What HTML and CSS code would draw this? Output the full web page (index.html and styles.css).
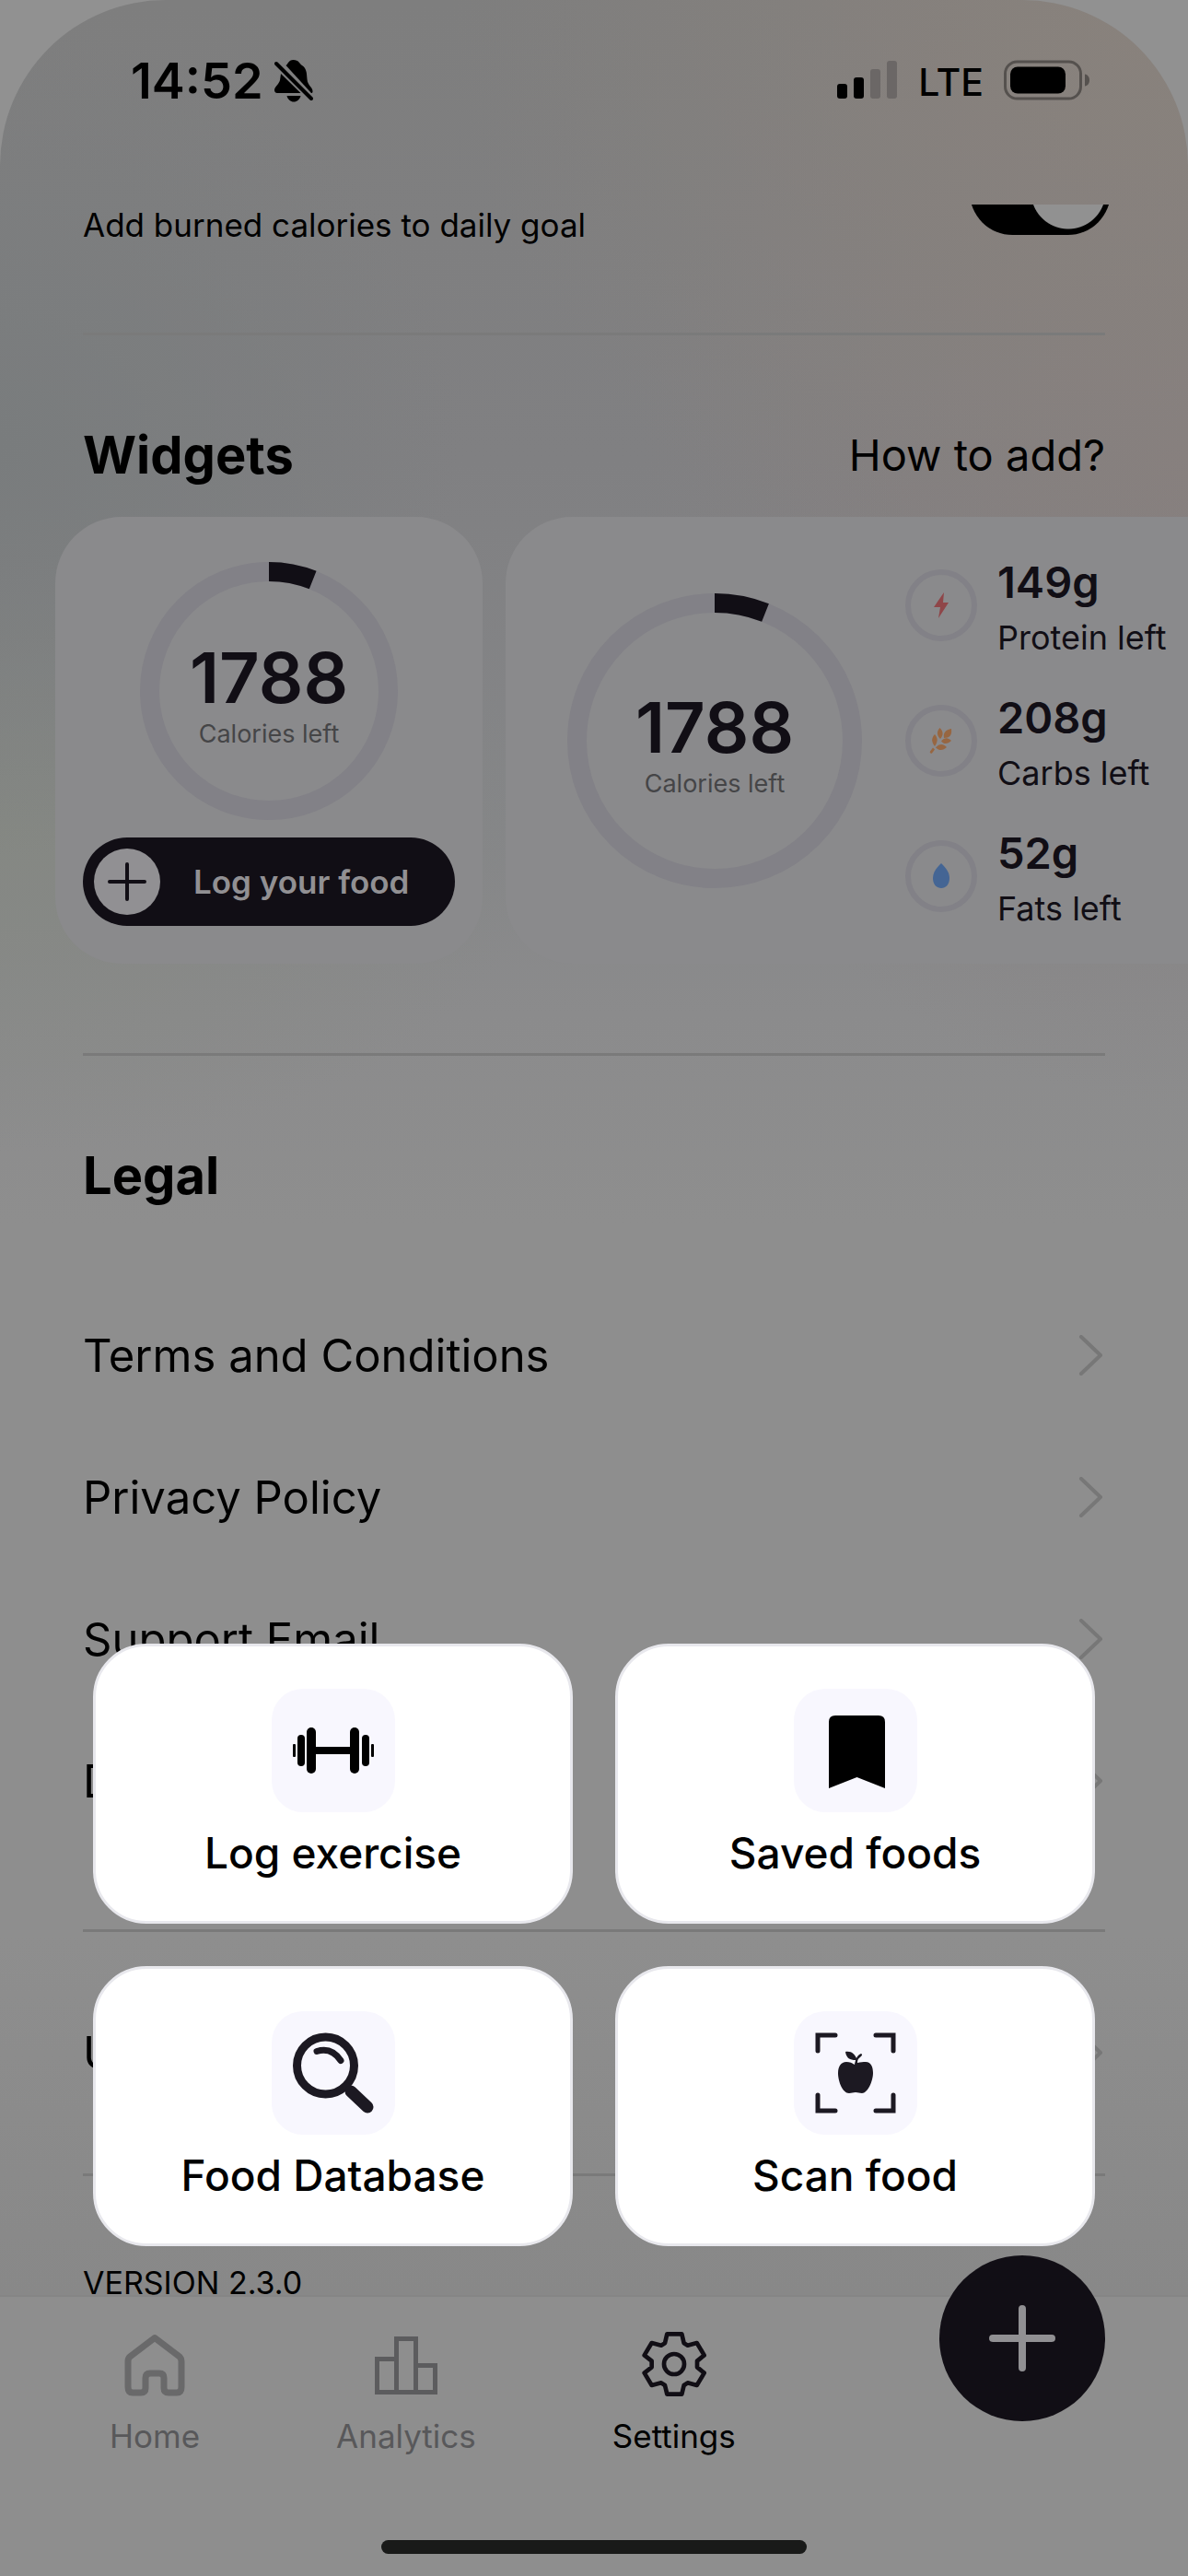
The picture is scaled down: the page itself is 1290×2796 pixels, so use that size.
FILE: index.html
```html
<!DOCTYPE html>
<html lang="en">
<head>
<meta charset="utf-8">
<meta name="viewport" content="width=device-width, initial-scale=1">
<title>Settings</title>
<link rel="stylesheet" href="styles.css">
</head>
<body>
<div class="screen">
  <header class="status">
    <span class="status-time">14:52</span>
    <svg class="bell" viewBox="0 0 42 46" aria-hidden="true">
      <path d="M12.500 6C14.500 5 15 0 20.500 0c6 0 6.500 4 9.500 6 5 3.500 5 8 5.500 15 .5 7 6 8.500 6 13 0 1.500-.5 2-1.500 2Z"/>
      <path d="M7 15 28.500 36H3c-2 0-3-1.500-3-3 0-4 5-6.500 6-11Z"/>
      <path d="M13.500 39h15c-1 4-4 6.500-7.500 6.500S14.500 43 13.500 39Z"/>
      <path class="bell-slash" d="M2 4 40 42"/>
    </svg>
    <svg class="signal" viewBox="0 0 66 42" aria-hidden="true">
      <rect x="0" y="26" width="11" height="16" rx="3"/>
      <rect x="18" y="19" width="11" height="23" rx="3"/>
      <rect class="faint" x="36" y="10" width="11" height="32" rx="3"/>
      <rect class="faint" x="54" y="1" width="11" height="41" rx="3"/>
    </svg>
    <span class="status-net">LTE</span>
    <svg class="battery" viewBox="0 0 94 44" aria-hidden="true">
      <rect class="battery-case" x="1.500" y="2" width="82" height="40" rx="13"/>
      <rect x="7" y="7.500" width="60" height="29" rx="8"/>
      <path class="battery-tip" d="M88 15.500c3 .5 5 3 5 6.500s-2 6-5 6.500Z"/>
    </svg>
  </header>

  <main class="content">
    <div class="toggle-row">
      <label for="burned">Add burned calories to daily goal</label>
      <span class="toggle-clip"><input id="burned" class="switch" type="checkbox" role="switch" checked></span>
    </div>
    <hr>

    <section class="widgets">
      <div class="section-head">
        <h2>Widgets</h2>
        <a href="#how">How to add?</a>
      </div>
      <div class="cards">
        <article class="card card-small">
          <div class="ring ring-s">
            <svg viewBox="0 0 280 280" aria-hidden="true">
              <circle class="track" cx="140" cy="140" r="129.500"/>
              <circle class="arc" cx="140" cy="140" r="129.500" pathLength="100"/>
            </svg>
            <div class="ring-text"><strong>1788</strong><span>Calories left</span></div>
          </div>
          <button class="log" type="button">
            <span class="log-plus"><svg viewBox="0 0 42 42" aria-hidden="true"><path d="M21 2v38M2 21h38"/></svg></span>
            Log your food
          </button>
        </article>
        <article class="card card-wide">
          <div class="ring ring-l">
            <svg viewBox="0 0 320 320" aria-hidden="true">
              <circle class="track" cx="160" cy="160" r="149.500"/>
              <circle class="arc" cx="160" cy="160" r="149.500" pathLength="100"/>
            </svg>
            <div class="ring-text"><strong>1788</strong><span>Calories left</span></div>
          </div>
          <ul class="macros">
            <li>
              <span class="macro-icon"><svg viewBox="0 0 30 30" aria-hidden="true"><path fill="#8f4649" d="M18 1 7 17h7l-2 12L23 12h-6Z"/></svg></span>
              <span class="macro-text"><strong>149g</strong><span>Protein left</span></span>
            </li>
            <li>
              <span class="macro-icon"><svg viewBox="0 0 30 30" aria-hidden="true"><g fill="#976641"><path d="M26 2c1 7-2 10-8 10-1-6 2-9 8-10Z"/><path d="M13.500 1c4 4 4 8 .5 12-4-4-4-8-.5-12Z"/><path d="M8 8c3.500 4 3.500 8 0 13-4-5-3.500-9 0-13Z"/><path d="M26 15c-4 4-8 4-11 .5 3.500-4 7-4.500 11-.5Z"/><path d="M21 22c-4 4-8 4-12 .5 4-4.500 8-4.500 12-.5Z"/><path d="m6 22.500 2 2-3 4c-1 1-3-.5-2-2Z"/></g></svg></span>
              <span class="macro-text"><strong>208g</strong><span>Carbs left</span></span>
            </li>
            <li>
              <span class="macro-icon"><svg viewBox="0 0 30 30" aria-hidden="true"><path fill="#446594" d="M15 1c4 4 9 9 9 16 0 7-4 11-9 11s-9-4-9-11c0-7 5-12 9-16Z"/></svg></span>
              <span class="macro-text"><strong>52g</strong><span>Fats left</span></span>
            </li>
          </ul>
        </article>
      </div>
    </section>
    <hr>

    <section class="legal">
      <div class="section-head"><h2>Legal</h2></div>
      <nav class="rows" aria-label="Legal">
        <a href="#terms">Terms and Conditions<svg viewBox="0 0 30 44" aria-hidden="true"><path d="M4 2 25 22 4 42"/></svg></a>
        <a href="#privacy">Privacy Policy<svg viewBox="0 0 30 44" aria-hidden="true"><path d="M4 2 25 22 4 42"/></svg></a>
        <a href="#support">Support Email<svg viewBox="0 0 30 44" aria-hidden="true"><path d="M4 2 25 22 4 42"/></svg></a>
        <a href="#delete">Delete Account<svg viewBox="0 0 30 44" aria-hidden="true"><path d="M4 2 25 22 4 42"/></svg></a>
      </nav>
    </section>
    <hr>
    <nav class="rows rows-single" aria-label="Subscription">
      <a href="#unsubscribe">Unsubscribe<svg viewBox="0 0 30 44" aria-hidden="true"><path d="M4 2 25 22 4 42"/></svg></a>
    </nav>
    <hr>
    <p class="version">VERSION 2.3.0</p>
  </main>

  <nav class="tabs" aria-label="Main">
    <a href="#home"><svg viewBox="0 0 72 72" aria-hidden="true"><path class="home" d="M36 7.500 63 28q2 2 2 5v28q0 6-5 6H51q-5 0-5-5V51q0-5-5-5H31q-5 0-5 5v11q0 5-5 5H12q-5 0-5-6V33q0-3 2-5Z"/></svg>Home</a>
    <a href="#analytics"><svg viewBox="0 0 72 72" aria-hidden="true"><path class="bars" d="M4.500 30.500h21v36h-21ZM25.500 8.500h21v58h-21ZM46.500 37.500h21v29h-21Z"/></svg>Analytics</a>
    <a class="active" href="#settings" aria-current="page"><svg viewBox="60 60 216 216" aria-hidden="true"><path class="gear" d="M145 70 193 70 200 100 212 107 242 99 266 139 243 158 243 178 266 197 242 237 212 229 200 237 193 266 145 266 138 237 126 229 95 237 71 197 95 178 95 158 71 139 95 99 126 107 138 100Z"/><circle class="gear" cx="168" cy="168" r="33"/></svg>Settings</a>
  </nav>

  <div class="quick">
    <button type="button">
      <span class="tile"><svg viewBox="0 0 88 88" aria-hidden="true"><rect x="0" y="37" width="3" height="14" rx="1"/><rect x="5" y="27" width="8" height="34" rx="4"/><rect x="15" y="19" width="10" height="50" rx="5"/><rect x="24" y="40" width="40" height="8"/><rect x="62" y="19" width="10" height="50" rx="5"/><rect x="75" y="27" width="8" height="34" rx="4"/><rect x="85" y="37" width="3" height="14" rx="1"/></svg></span>
      Log exercise
    </button>
    <button type="button">
      <span class="tile"><svg viewBox="0 0 88 88" aria-hidden="true"><path d="M15 13q0-7 7-7h47q7 0 7 7v72L45.500 73 15 85Z"/></svg></span>
      Saved foods
    </button>
    <button type="button">
      <span class="tile"><svg viewBox="0 0 88 88" aria-hidden="true"><circle class="ink-line" cx="35.500" cy="36" r="31" stroke-width="9"/><path class="ink-line" stroke-width="7" d="M26 20.500q16-5 26 10"/><path class="ink-line" stroke-width="9" d="m58 59 5 5"/><path class="ink-line" stroke-width="13" d="m63 64 18 17"/></svg></span>
      Food Database
    </button>
    <button type="button">
      <span class="tile"><svg viewBox="0 0 88 88" aria-hidden="true"><path class="ink-line" stroke-width="5" d="M22 3H3v17M66 3h19v17M22 85H3V68M66 85h19V68"/><path class="ink" d="M43 35c0-2 1-4 1-5-6 0-10-2-11-9 7-1 10 3 12 7 1-2 2-4 5-5 2 1 1 2-1 4-2 1-3 3-3 6 4-1 6-1 9-1 6 0 8 6 8 12 0 9-6 22-12 22-3 0-4-1-7-1s-4 1-7 1c-7 0-12-13-12-22 0-7 3-12 9-12 4 0 6 1 9 3Z"/></svg></span>
      Scan food
    </button>
  </div>

  <button class="fab" type="button" aria-label="Close menu"><svg viewBox="0 0 72 72" aria-hidden="true"><path d="M36 4v64M4 36h64"/></svg></button>
  <div class="home-bar"></div>
</div>
</body>
</html>
```
FILE: styles.css
```css
* { box-sizing: border-box; }

body {
  margin: 0;
  background: #919191;
  color: #000;
  font-family: Inter, "Liberation Sans", sans-serif;
  font-size: 49px;
}

h2, p, ul { margin: 0; padding: 0; }
a { color: inherit; text-decoration: none; }
button { font: inherit; color: inherit; border: 0; cursor: pointer; }
svg { display: block; flex: none; }

.screen {
  position: relative;
  display: flex;
  flex-direction: column;
  height: 100vh;
  overflow: hidden;
  border-radius: 180px 180px 0 0;
  background:
    radial-gradient(800px 700px at 100% 0, #89827c 0%, rgb(137 130 124 / 0) 100%),
    radial-gradient(600px 700px at 100% 500px, #867f7f 0%, rgb(134 127 127 / 0) 100%),
    radial-gradient(500px 450px at 0 480px, #797c7d 0%, rgb(121 124 125 / 0) 100%),
    radial-gradient(600px 350px at 0 900px, #858883 0%, rgb(133 136 131 / 0) 100%),
    linear-gradient(#7e7e7e 0, #808082 500px, #858688 900px, #8b8b8c 1100px, #8e8e8e 1330px, #8e8e8e 2100px, #888 2490px);
}

.status {
  flex: none;
  display: flex;
  align-items: flex-start;
  height: 222px;
  padding: 65px 106px 0 142px;
}
.status-time { font-size: 54px; font-weight: 600; line-height: 46px; }
.status-net { font-size: 41px; font-weight: 500; line-height: 48px; margin: 0 22px; }
.bell { width: 42px; height: 46px; margin-left: 12px; }
.bell-slash { fill: none; stroke: #000; stroke-width: 4; stroke-linecap: round; }
.signal { width: 66px; height: 42px; margin-left: auto; }
.faint { fill: #6b6766; }
.battery { width: 94px; height: 44px; }
.battery-case { fill: none; stroke: #55514e; stroke-width: 3; }
.battery-tip { fill: #55514e; }

.content { flex: 1; min-height: 0; overflow: hidden; }

hr { height: 3px; margin: 0 90px; border: 0; background: #7a7a7a; }

.toggle-row {
  display: flex;
  justify-content: space-between;
  height: 139px;
  padding: 0 84px 0 90px;
  font-size: 35px;
  line-height: 45px;
}
.toggle-clip { display: flex; align-items: flex-end; height: 33px; overflow: hidden; }
.switch {
  appearance: none;
  flex: none;
  width: 153px;
  height: 93px;
  margin: 0;
  border-radius: 47px;
  background: radial-gradient(circle at 107px 46px, #919191 40px, #000 41px);
}

.section-head {
  display: flex;
  justify-content: space-between;
  align-items: center;
  padding: 94px 90px 0;
  font-size: 47px;
  line-height: 72px;
}
h2 { font-size: 56px; font-weight: 700; }

.widgets { padding-bottom: 97px; }
.cards { display: flex; gap: 25px; margin-top: 31px; padding-left: 60px; overflow: hidden; }
.card {
  flex: none;
  display: flex;
  height: 485px;
  border-radius: 72px;
  background: #8a8a8c;
  color: #110e15;
}
.card-small { flex-direction: column; align-items: center; gap: 19px; width: 464px; padding: 49px 30px 0; }
.card-wide { align-items: center; gap: 47px; width: 990px; padding-left: 67px; }

.ring { display: grid; place-items: center; }
.ring > * { grid-area: 1 / 1; }
.ring-s svg { width: 280px; height: 280px; }
.ring-l svg { width: 320px; height: 320px; }
.track, .arc { fill: none; stroke-width: 21; stroke: #828187; }
.arc { stroke: #110e15; stroke-dasharray: 6 94; transform: rotate(-90deg); transform-origin: center; }
.ring-text { display: flex; flex-direction: column; align-items: center; padding-top: 10px; }
.ring-text strong { font-size: 76px; font-weight: 600; line-height: 84px; }
.ring-text span { font-size: 27px; line-height: 40px; color: #454547; }

.log {
  display: flex;
  align-items: center;
  gap: 36px;
  width: 100%;
  height: 96px;
  padding: 0 12px;
  border-radius: 48px;
  background: #110e15;
  color: #919093;
  font-size: 35px;
  font-weight: 600;
}
.log-plus { display: grid; place-items: center; width: 72px; height: 72px; border-radius: 50%; background: #919093; }
.log-plus svg { width: 42px; height: 42px; fill: none; stroke: #110e15; stroke-width: 4; stroke-linecap: round; }

.macros { list-style: none; }
.macros li { display: flex; align-items: center; gap: 22px; height: 147px; }
.macro-icon { display: grid; place-items: center; width: 78px; height: 78px; border: 6px solid #828187; border-radius: 50%; }
.macro-icon svg { width: 30px; height: 30px; }
.macro-text { display: flex; flex-direction: column; padding-top: 10px; font-size: 36px; line-height: 60px; white-space: nowrap; }
.macro-text strong { font-size: 47px; font-weight: 600; }

.rows { display: flex; flex-direction: column; padding: 0 90px; }
.legal .rows { padding-top: 82px; padding-bottom: 84px; }
.rows a { display: flex; justify-content: space-between; align-items: center; height: 154px; }
.rows svg { width: 30px; height: 44px; fill: none; stroke: #777; stroke-width: 4; stroke-linecap: round; stroke-linejoin: round; }
.rows-single { padding-top: 54px; padding-bottom: 54px; }

.version { padding: 103px 90px 0; font-size: 34px; line-height: 26px; }

.tabs {
  flex: none;
  display: flex;
  align-items: flex-start;
  gap: 148px;
  height: 305px;
  padding: 37px 119px 0;
  border-top: 2px solid #858585;
  background: #8e8e8e;
}
.tabs a { display: flex; flex-direction: column; align-items: center; gap: 14px; color: #58585a; font-size: 35px; line-height: 56px; }
.tabs .active { color: #000; }
.tabs svg { width: 72px; height: 72px; fill: none; stroke-linejoin: round; }
.home { stroke: #69696a; stroke-width: 7; }
.bars { stroke: #5c5c5e; stroke-width: 5; stroke-linejoin: miter; }
.gear { stroke: #110e15; stroke-width: 14; }

.quick {
  position: absolute;
  left: 101px;
  right: 101px;
  bottom: 358px;
  display: grid;
  grid-template-columns: 1fr 1fr;
  gap: 46px;
}
.quick button {
  display: flex;
  flex-direction: column;
  align-items: center;
  gap: 14px;
  height: 304px;
  padding: 46px 0 0;
  border: 3px solid #e8e8ed;
  border-radius: 58px;
  background: #fff;
  font-size: 46px;
  font-weight: 500;
  line-height: 60px;
}
.tile { display: grid; place-items: center; width: 134px; height: 134px; border-radius: 34px; background: #f8f7fe; }
.tile svg { width: 88px; height: 88px; }
.ink { fill: #1c1922; }
.ink-line { fill: none; stroke: #1c1922; stroke-linecap: round; }

.fab {
  position: absolute;
  right: 90px;
  bottom: 168px;
  display: grid;
  place-items: center;
  width: 180px;
  height: 180px;
  padding: 0;
  border-radius: 50%;
  background: #110e15;
}
.fab svg { width: 72px; height: 72px; fill: none; stroke: #919093; stroke-width: 8; stroke-linecap: round; }

.home-bar {
  position: absolute;
  left: 50%;
  bottom: 24px;
  width: 462px;
  height: 15px;
  margin-left: -231px;
  border-radius: 8px;
  background: #191a19;
}
```
